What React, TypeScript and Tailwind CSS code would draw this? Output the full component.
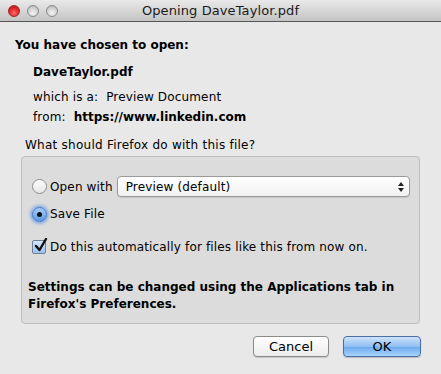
import React from "react";

const font = { fontFamily: '"DejaVu Sans", "Liberation Sans", sans-serif' };

function Traffic({ red }: { red?: boolean }) {
  return (
    <div
      className={
        "w-[12px] h-[12px] rounded-full border " +
        (red
          ? "border-[#a0262a] bg-[radial-gradient(circle_at_50%_70%,#ff6a6a_0%,#e0262a_55%,#a81418_100%)]"
          : "border-[#8a8a8a] bg-[radial-gradient(circle_at_50%_70%,#f4f4f4_0%,#cfcfcf_60%,#a8a8a8_100%)]")
      }
    />
  );
}

export default function App() {
  return (
    <div className="w-[441px] h-[374px] bg-[#e8e8e8] text-black flex flex-col overflow-hidden" style={font}>
      {/* title bar */}
      <div className="relative h-[22px] bg-[linear-gradient(#e9e9e9,#c4c4c4)] border-b border-[#555] flex items-center px-[8px]">
        <div className="flex gap-[7px] items-center">
          <Traffic red />
          <Traffic />
          <Traffic />
        </div>
        <div className="absolute inset-0 flex items-center justify-center text-[13px] text-[#1a1a1a] tracking-[0.1px]">
          Opening DaveTaylor.pdf
        </div>
      </div>

      <div className="pl-[15px] pt-[15px] text-[12px]">
        <div className="font-bold leading-[16px]">You have chosen to open:</div>
        <div className="pl-[18px] pt-[11px] font-bold leading-[16px]">DaveTaylor.pdf</div>
        <div className="pl-[18px] pt-[9px] leading-[16px] tracking-[0.15px]">which is a:&nbsp; Preview Document</div>
        <div className="pl-[18px] pt-[4px] leading-[16px] tracking-[0.15px]">
          from:&nbsp; <span className="font-bold tracking-normal">https://www.linkedin.com</span>
        </div>
      </div>

      <div className="pl-[25px] pt-[12px] text-[12px] leading-[16px] tracking-[0.25px]">What should Firefox do with this file?</div>

      <div className="mx-[21px] mt-[3px] h-[168px] rounded-[4px] border border-[#bdbdbd] bg-[#dcdcdc] text-[12px] flex flex-col px-[10px]">
        <div className="flex items-center mt-[19px] h-[21px] whitespace-nowrap tracking-[0.15px]">
          <div className="shrink-0 w-[15px] h-[15px] rounded-full border border-[#8e8e8e] bg-[linear-gradient(#fdfdfd,#e6e6e6)]" />
          <span className="ml-[3px]">Open with</span>
          <div className="ml-[4px] w-[293px] shrink-0 h-[21px] rounded-[4px] border border-[#9a9a9a] bg-[linear-gradient(#ffffff,#f1f1f1)] flex items-center pl-[8px] pr-[4px] shadow-[0_1px_1px_rgba(0,0,0,0.1)]">
            <span className="flex-1">Preview (default)</span>
            <svg width="8" height="12" viewBox="0 0 8 12">
              <path d="M4 1 L7 5 L1 5 Z" fill="#222" />
              <path d="M4 11 L7 7 L1 7 Z" fill="#222" />
            </svg>
          </div>
        </div>
        <div className="flex items-center mt-[7px] h-[20px] tracking-[0.15px]">
          <div className="shrink-0 w-[15px] h-[15px] rounded-full border border-[#3d74c9] bg-[linear-gradient(#a9cdf6,#5b9be6)] shadow-[0_0_3px_2px_rgba(80,140,230,0.6)] flex items-center justify-center">
            <div className="w-[5px] h-[5px] rounded-full bg-[#111]" />
          </div>
          <span className="ml-[3px]">Save File</span>
        </div>
        <div className="flex items-center mt-[13px] h-[20px] whitespace-nowrap tracking-[0.15px]">
          <div className="shrink-0 relative w-[14px] h-[14px] rounded-[2px] border border-[#6e7f99] bg-[linear-gradient(#d6e6fb,#9cc0ee)]">
            <svg className="absolute left-[1px] top-[-3px]" width="14" height="15" viewBox="0 0 14 15">
              <path d="M2 8 L5.5 12 L12 1" stroke="#111" strokeWidth="2.4" fill="none" strokeLinecap="round" strokeLinejoin="round" />
            </svg>
          </div>
          <span className="ml-[4px]">Do this automatically for files like this from now on.</span>
        </div>
        <div className="mt-[22px] -ml-[4px] font-bold leading-[17px]">
          Settings can be changed using the Applications tab in
          <br />
          Firefox's Preferences.
        </div>
      </div>

      <div className="flex justify-end gap-[14px] pr-[20px] mt-[12px] text-[13px]">
        <div className="w-[76px] h-[21px] rounded-[4px] border border-[#8a8a8a] bg-[linear-gradient(#ffffff,#ececec)] flex items-center justify-center shadow-[0_1px_1px_rgba(0,0,0,0.15)]">
          Cancel
        </div>
        <div className="w-[78px] h-[21px] rounded-[4px] border border-[#4a6fa8] bg-[linear-gradient(#cfe3fb_0%,#8fbff2_50%,#6aa8ec_51%,#a8d3fb_100%)] flex items-center justify-center shadow-[0_1px_1px_rgba(0,0,0,0.2)]">
          OK
        </div>
      </div>
    </div>
  );
}
